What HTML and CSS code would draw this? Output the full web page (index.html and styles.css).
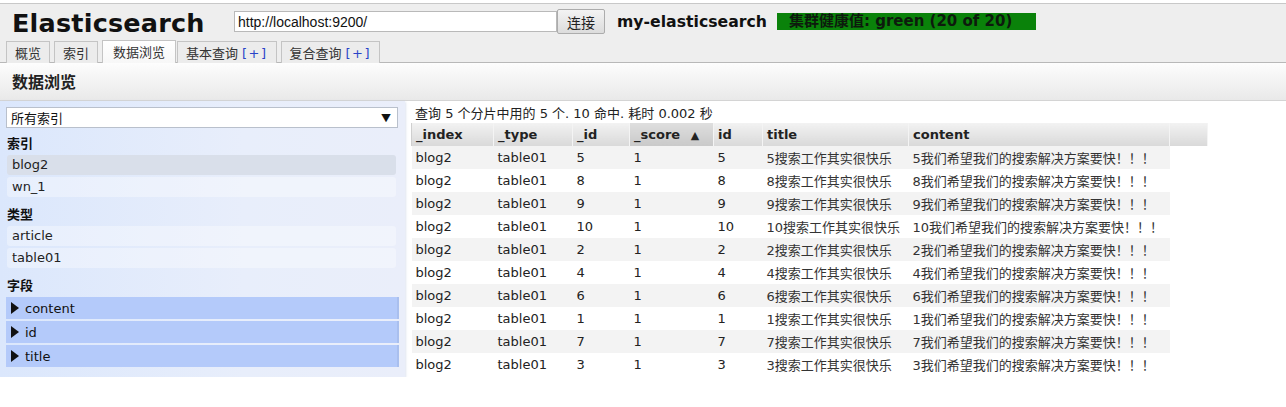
FILE: index.html
```html
<!DOCTYPE html>
<html lang="zh-CN">
<head>
<meta charset="utf-8">
<title>Elasticsearch Head</title>
<link rel="stylesheet" href="styles.css">
</head>
<body>
<div class="top">
  <header class="hdr">
    <h1 class="logo">Elasticsearch</h1>
    <input class="url" type="text" value="http://localhost:9200/" readonly>
    <button class="btn" type="button">连接</button>
    <span class="cluster">my-elasticsearch</span>
    <span class="health">集群健康值: green (20 of 20)</span>
  </header>
  <nav class="tabs">
    <span class="tab">概览</span>
    <span class="tab">索引</span>
    <span class="tab tab-active">数据浏览</span>
    <span class="tab">基本查询 <span class="plus">[+]</span></span>
    <span class="tab">复合查询 <span class="plus">[+]</span></span>
  </nav>
</div>
<div class="subhdr"><h2 class="subtitle">数据浏览</h2></div>
<main class="browser">
  <aside class="side">
    <div class="select"><span>所有索引</span><span class="arrow">▼</span></div>
    <div class="heading">索引</div>
    <div class="item item-sel">blog2</div>
    <div class="item">wn_1</div>
    <div class="heading">类型</div>
    <div class="item">article</div>
    <div class="item">table01</div>
    <div class="heading heading-last">字段</div>
    <div class="field"><span class="tri"></span>content</div>
    <div class="field"><span class="tri"></span>id</div>
    <div class="field"><span class="tri"></span>title</div>
  </aside>
  <section class="results">
    <div class="summary">查询 5 个分片中用的 5 个. 10 命中. 耗时 0.002 秒</div>
    <table class="grid">
      <colgroup>
        <col class="c-index"><col class="c-type"><col class="c-id"><col class="c-score"><col class="c-id2"><col class="c-title"><col class="c-content"><col class="c-extra">
      </colgroup>
      <thead>
        <tr>
          <th>_index</th><th>_type</th><th>_id</th><th class="sorted">_score <span class="sort">▲</span></th><th>id</th><th>title</th><th>content</th><th></th>
        </tr>
      </thead>
      <tbody>
        <tr><td>blog2</td><td>table01</td><td>5</td><td>1</td><td>5</td><td>5搜索工作其实很快乐</td><td>5我们希望我们的搜索解决方案要快！！！</td><td class="blank"></td></tr>
        <tr><td>blog2</td><td>table01</td><td>8</td><td>1</td><td>8</td><td>8搜索工作其实很快乐</td><td>8我们希望我们的搜索解决方案要快！！！</td><td class="blank"></td></tr>
        <tr><td>blog2</td><td>table01</td><td>9</td><td>1</td><td>9</td><td>9搜索工作其实很快乐</td><td>9我们希望我们的搜索解决方案要快！！！</td><td class="blank"></td></tr>
        <tr><td>blog2</td><td>table01</td><td>10</td><td>1</td><td>10</td><td>10搜索工作其实很快乐</td><td>10我们希望我们的搜索解决方案要快！！！</td><td class="blank"></td></tr>
        <tr><td>blog2</td><td>table01</td><td>2</td><td>1</td><td>2</td><td>2搜索工作其实很快乐</td><td>2我们希望我们的搜索解决方案要快！！！</td><td class="blank"></td></tr>
        <tr><td>blog2</td><td>table01</td><td>4</td><td>1</td><td>4</td><td>4搜索工作其实很快乐</td><td>4我们希望我们的搜索解决方案要快！！！</td><td class="blank"></td></tr>
        <tr><td>blog2</td><td>table01</td><td>6</td><td>1</td><td>6</td><td>6搜索工作其实很快乐</td><td>6我们希望我们的搜索解决方案要快！！！</td><td class="blank"></td></tr>
        <tr><td>blog2</td><td>table01</td><td>1</td><td>1</td><td>1</td><td>1搜索工作其实很快乐</td><td>1我们希望我们的搜索解决方案要快！！！</td><td class="blank"></td></tr>
        <tr><td>blog2</td><td>table01</td><td>7</td><td>1</td><td>7</td><td>7搜索工作其实很快乐</td><td>7我们希望我们的搜索解决方案要快！！！</td><td class="blank"></td></tr>
        <tr><td>blog2</td><td>table01</td><td>3</td><td>1</td><td>3</td><td>3搜索工作其实很快乐</td><td>3我们希望我们的搜索解决方案要快！！！</td><td class="blank"></td></tr>
      </tbody>
    </table>
  </section>
</main>
</body>
</html>
```
FILE: styles.css
```css
* { box-sizing: border-box; }
html, body { margin: 0; padding: 0; background: #fff; }
body {
  font-family: "DejaVu Sans", "Noto Sans CJK SC", sans-serif;
  font-size: 13px;
  color: #222;
  padding-top: 3px;
}
.top {
  background: #eeeeee;
  border-top: 1px solid #c8c8c8;
  border-bottom: 1px solid #b8b8b8;
}
.hdr {
  display: flex;
  align-items: center;
  height: 35px;
  padding-left: 12px;
}
.logo {
  margin: 0;
  font-family: "DejaVu Sans", sans-serif;
  font-weight: bold;
  font-size: 25.5px;
  letter-spacing: 0.2px;
  color: #111;
  width: 222px;
  line-height: 30px;
  padding-top: 2px;
}
.url {
  width: 323px;
  height: 21px;
  border: 1px solid #b9b9b9;
  background: #fff;
  font-family: "Liberation Sans", sans-serif;
  font-size: 14px;
  padding: 0 3px;
  color: #111;
  margin: 0;
  outline: none;
}
.btn {
  width: 48px;
  height: 25px;
  margin: 0 12px 0 0;
  border: 1px solid #acacac;
  border-radius: 2px;
  background: linear-gradient(#f3f3f3, #dcdcdc);
  font-family: "Noto Sans CJK SC", sans-serif;
  font-size: 14px;
  color: #222;
  padding: 0;
}
.cluster {
  font-weight: bold;
  font-size: 15.7px;
  color: #111;
  margin-right: 10px;
}
.health {
  background: #0a820a;
  color: #0d1a0d;
  font-weight: bold;
  font-size: 15px;
  height: 17px;
  line-height: 17px;
  width: 259px;
  padding-left: 12px;
  white-space: nowrap;
  overflow: hidden;
}
.tabs {
  display: flex;
  gap: 4px;
  padding: 1px 0 0 6px;
  height: 23px;
  align-items: flex-end;
}
.tab {
  height: 22px;
  line-height: 21px;
  padding: 0 8px;
  border: 1px solid #c4c4c4;
  border-bottom: none;
  background: #ececec;
  color: #333;
  font-family: "Noto Sans CJK SC", sans-serif;
  font-size: 13px;
  margin-bottom: -1px;
  white-space: nowrap;
}
.tab-active {
  background: linear-gradient(#ffffff, #f7f7f7);
  height: 23px;
  border-color: #c4c4c4;
  margin: 0 -3px -1px 0;
  padding: 0 10px;
}
.plus {
  color: #2a44c8;
  font-family: "DejaVu Sans", sans-serif;
  font-size: 13px;
  letter-spacing: 1.5px;
  margin-left: 1px;
}
.subhdr {
  height: 38px;
  background: linear-gradient(#fdfdfd, #e9e9e9);
  border-bottom: 1px solid #d4d4d4;
  padding-left: 12px;
}
.subtitle {
  margin: 0;
  font-family: "Noto Sans CJK SC", sans-serif;
  font-weight: bold;
  font-size: 16px;
  line-height: 37px;
  color: #222;
}
.browser {
  display: flex;
  align-items: flex-start;
}
.side {
  width: 405px;
  background: linear-gradient(90deg, #dbe7fc, #e8eefb 60%, #eaeefa);
  padding: 6px 6px 8px 6px;
  box-shadow: 1px 1px 2px rgba(200,210,230,0.6);
}
.select {
  display: flex;
  justify-content: space-between;
  align-items: center;
  height: 21px;
  width: 392px;
  background: #fff;
  border: 1px solid #b9c0cc;
  padding: 0 6px 0 4px;
  font-family: "Noto Sans CJK SC", sans-serif;
  font-size: 13px;
  color: #111;
}
.arrow { font-size: 10px; color: #111; }
.heading {
  height: 27px;
  line-height: 29px;
  font-family: "Noto Sans CJK SC", sans-serif;
  font-weight: bold;
  font-size: 13px;
  color: #111;
  padding-left: 1px;
}
.heading-last { height: 27px; }
.item {
  height: 20px;
  line-height: 20px;
  margin: 0 3px 2px 1px;
  padding-left: 5px;
  border-radius: 3px;
  background: rgba(255,255,255,0.35);
  color: #222;
}
.item-sel { background: #d9dfea; }
.field {
  display: flex;
  align-items: center;
  height: 22px;
  margin: 0 0 2px 0;
  padding-left: 5px;
  background: #b4cafa;
  border-right: 2px solid #a9bfee;
  color: #111;
}
.tri {
  width: 0;
  height: 0;
  border-top: 6px solid transparent;
  border-bottom: 6px solid transparent;
  border-left: 8px solid #111;
  margin-right: 6px;
}
.results {
  padding: 3px 0 0 6px;
}
.summary {
  height: 19px;
  line-height: 19px;
  padding-left: 4px;
  font-size: 13px;
  color: #222;
}
.grid {
  border-collapse: collapse;
  table-layout: fixed;
  width: 796px;
}
.c-index { width: 82px; }
.c-type { width: 79px; }
.c-id { width: 57px; }
.c-score { width: 84px; }
.c-id2 { width: 49px; }
.c-title { width: 146px; }
.c-content { width: 261px; }
.c-extra { width: 38px; }
.grid th {
  height: 23px;
  text-align: left;
  font-weight: bold;
  font-size: 13px;
  color: #222;
  padding: 0 4px;
  background: linear-gradient(#f2f2f2, #d9d9d9);
  border-right: 1px solid #f4f4f4;
  border-left: 1px solid #cfcfcf;
  white-space: nowrap;
}
.grid th.sorted { background: linear-gradient(#dedede, #c9c9c9); }
.sort { font-size: 11px; margin-left: 6px; }
.grid td {
  height: 23px;
  padding: 0 4px;
  white-space: nowrap;
  overflow: visible;
  color: #222;
  font-size: 13px;
}
.grid td:nth-child(6), .grid td:nth-child(7) {
  color: #333;
}
.grid tbody tr:nth-child(odd) td { background: #f3f3f3; }
.grid tbody tr td.blank { background: transparent !important; }
```
